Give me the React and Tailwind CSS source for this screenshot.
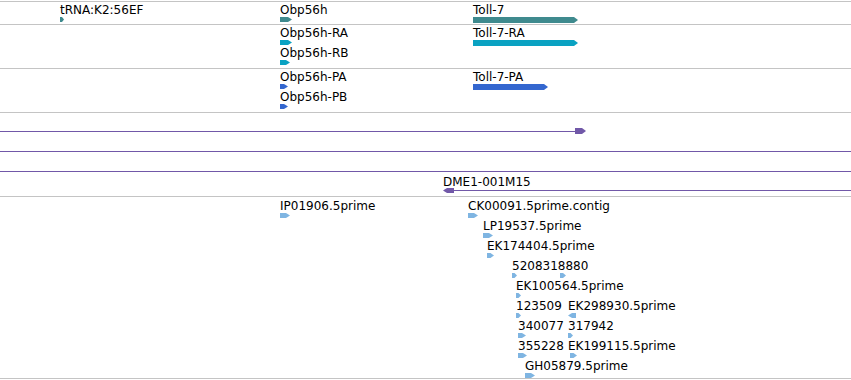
import React from "react";

const GENE = "#3f8a8e";
const MRNA = "#0aa2c2";
const CDS = "#3467cf";
const EST = "#7fb5e2";
const CLONE = "#7158a8";

// small arrow glyph, pointing right or left
const Glyph = ({ x, y, w, h = 5, color, dir = "right" }) => {
  const tip = Math.min(4, w / 2);
  const pts =
    dir === "right"
      ? `0,0 ${w - tip},0 ${w},${h / 2} ${w - tip},${h} 0,${h}`
      : `${tip},0 ${w},0 ${w},${h} ${tip},${h} 0,${h / 2}`;
  return (
    <svg
      className="absolute"
      style={{ left: x, top: y }}
      width={w}
      height={h}
      viewBox={`0 0 ${w} ${h}`}
    >
      <polygon points={pts} fill={color} />
    </svg>
  );
};

const Label = ({ x, y, children }) => (
  <div
    className="absolute whitespace-nowrap text-[12px] leading-[12px] text-black"
    style={{ left: x, top: y }}
  >
    {children}
  </div>
);

// label on top, glyph 13px below
const Feature = ({ x, y, label, w, h = 5, color, dir, gx }) => (
  <>
    {label && <Label x={x}  y={y}>{label}</Label>}
    <Glyph x={gx ?? x} y={y + 13} w={w} h={h} color={color} dir={dir} />
  </>
);

const Track = ({ h, children }) => (
  <div className="relative border-t border-[#c4c4c4]" style={{ height: h }}>
    {children}
  </div>
);

const estRows = [
  { x: 280, y: 3, label: "IP01906.5prime", w: 10 },
  { x: 468, y: 3, label: "CK00091.5prime.contig", w: 10 },
  { x: 483, y: 23, label: "LP19537.5prime", w: 10 },
  { x: 487, y: 43, label: "EK174404.5prime", w: 7 },
  { x: 512, y: 63, label: "5208318880", w: 5 },
  { x: 560, y: 63, label: null, w: 6 },
  { x: 516, y: 83, label: "EK100564.5prime", w: 5 },
  { x: 516, y: 103, label: "123509", w: 5 },
  { x: 568, y: 103, label: "EK298930.5prime", w: 8, dir: "left" },
  { x: 518, y: 123, label: "340077", w: 8 },
  { x: 568, y: 123, label: "317942", w: 5 },
  { x: 518, y: 143, label: "355228", w: 9 },
  { x: 568, y: 143, label: "EK199115.5prime", w: 7, gx: 570 },
  { x: 525, y: 163, label: "GH05879.5prime", w: 10 },
];

export default function App() {
  return (
    <div
      className="w-[851px] h-[380px] bg-white overflow-hidden pt-[1px]"
      style={{ fontFamily: '"DejaVu Sans", sans-serif' }}
    >
      {/* genes */}
      <Track h={23}>
        <Feature x={60} y={2} label="tRNA:K2:56EF" w={4} color={GENE} />
        <Feature x={280} y={2} label="Obp56h" w={12} color={GENE} />
        <Feature x={473} y={2} label="Toll-7" w={105} h={6} color={GENE} />
      </Track>
      {/* transcripts */}
      <Track h={44}>
        <Feature x={280} y={2} label="Obp56h-RA" w={12} color={MRNA} />
        <Feature x={280} y={22} label="Obp56h-RB" w={10} color={MRNA} />
        <Feature x={473} y={2} label="Toll-7-RA" w={105} h={6} color={MRNA} />
      </Track>
      {/* proteins */}
      <Track h={44}>
        <Feature x={280} y={2} label="Obp56h-PA" w={8} color={CDS} />
        <Feature x={280} y={22} label="Obp56h-PB" w={8} color={CDS} />
        <Feature x={473} y={2} label="Toll-7-PA" w={75} h={6} color={CDS} />
      </Track>
      {/* clones */}
      <Track h={84}>
        <div className="absolute left-0 top-[18px] h-px w-[576px] bg-[#7158a8]" />
        <Glyph x={575} y={15} w={11} h={6} color={CLONE} />
        <div className="absolute left-0 right-0 top-[38px] h-px bg-[#7158a8]" />
        <div className="absolute left-0 right-0 top-[58px] h-px bg-[#7158a8]" />
        <Label x={443} y={63}>DME1-001M15</Label>
        <div className="absolute left-[450px] right-0 top-[77px] h-px bg-[#7158a8]" />
        <Glyph x={443} y={75} w={11} h={5} color={CLONE} dir="left" />
      </Track>
      {/* ESTs */}
      <Track h={182}>
        {estRows.map((r, i) => (
          <Feature
            key={i}
            x={r.x}
            y={r.y}
            label={r.label}
            w={r.w}
            color={EST}
            dir={r.dir}
            gx={r.gx}
          />
        ))}
      </Track>
      <div className="border-t border-[#c4c4c4]" />
    </div>
  );
}
